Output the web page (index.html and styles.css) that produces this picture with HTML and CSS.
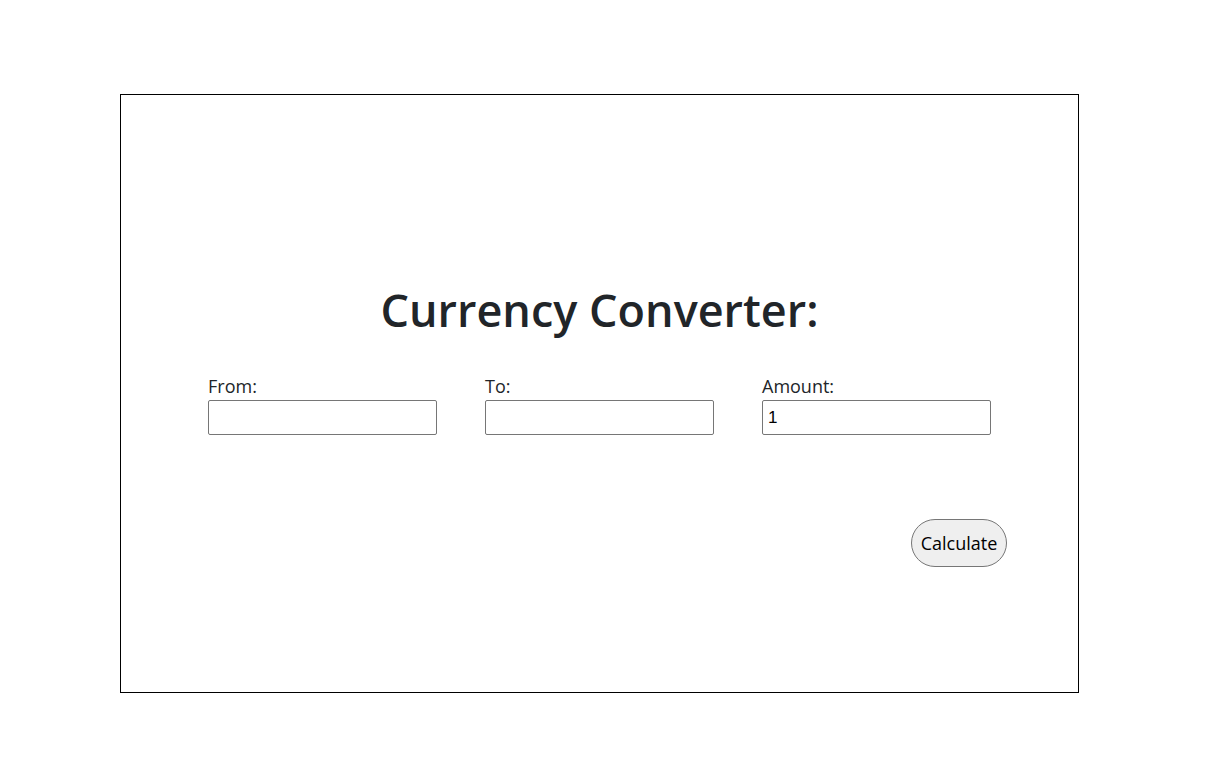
FILE: index.html
```html
<!DOCTYPE html>
<html>
<head>
<meta charset="utf-8">
<link rel="stylesheet" href="styles.css">
</head>
<body>
<div class="box">
  <h1 class="title">Currency Converter:</h1>
  <div class="fields">
    <div class="field">
      <label class="label">From:</label>
      <input class="input" type="text">
    </div>
    <div class="field">
      <label class="label">To:</label>
      <input class="input" type="text">
    </div>
    <div class="field">
      <label class="label">Amount:</label>
      <input class="input" type="text" value="1">
    </div>
  </div>
  <div class="actions">
    <button class="btn">Calculate</button>
  </div>
</div>
</body>
</html>
```

FILE: styles.css
```css
html, body {
  margin: 0;
  padding: 0;
  background: #fff;
}
body {
  font-family: "Open Sans", "Noto Sans", sans-serif;
  color: #212529;
}
.box {
  box-sizing: border-box;
  width: 959px;
  height: 599px;
  margin: 94px 0 0 120px;
  border: 1px solid #000;
  display: flex;
  flex-direction: column;
  padding-top: 188px;
}
.title {
  margin: 0;
  text-align: center;
  font-size: 45px;
  font-weight: 600;
  line-height: 54px;
}
.fields {
  display: grid;
  grid-template-columns: repeat(3, 229px);
  column-gap: 48px;
  padding-left: 87px;
  margin-top: 37px;
}
.field {
  display: flex;
  flex-direction: column;
}
.label {
  font-size: 18px;
  line-height: 24px;
  margin-bottom: 2px;
}
.input {
  box-sizing: border-box;
  width: 229px;
  height: 35px;
  margin: 0;
  border: 1px solid #767676;
  border-radius: 2px;
  padding: 2px 5px 1px;
  font-family: "Liberation Sans", Arial, sans-serif;
  font-size: 17px;
  color: #000;
}
.actions {
  display: flex;
  justify-content: flex-end;
  padding-right: 71px;
  margin-top: 84px;
}
.btn {
  box-sizing: border-box;
  width: 96px;
  height: 48px;
  border: 1px solid #767676;
  border-radius: 24px;
  background: #efefef;
  font-family: "Open Sans", "Noto Sans", sans-serif;
  font-size: 18px;
  color: #000;
  padding: 0;
}
```
